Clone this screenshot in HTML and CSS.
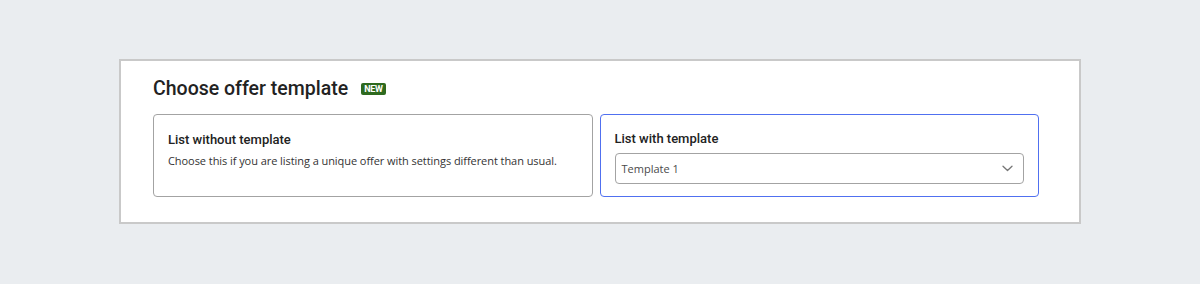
FILE: index.html
```html
<!DOCTYPE html>
<html lang="en">
<head>
<meta charset="utf-8">
<title>Choose offer template</title>
<link rel="stylesheet" href="styles.css">
</head>
<body>
  <section class="panel">
    <header class="panel-head">
      <h2 class="panel-title">Choose offer template</h2>
      <span class="badge">NEW</span>
    </header>
    <div class="options">
      <div class="option">
        <h3 class="option-title">List without template</h3>
        <p class="option-desc">Choose this if you are listing a unique offer with settings different than usual.</p>
      </div>
      <div class="option option-active">
        <h3 class="option-title">List with template</h3>
        <div class="select">
          <span class="select-value">Template 1</span>
          <svg class="select-chevron" width="11" height="7" viewBox="0 0 11 7" aria-hidden="true">
            <path d="M1 1.2 L5.5 5.5 L10 1.2" fill="none" stroke="#767676" stroke-width="1.3" stroke-linecap="round" stroke-linejoin="round"/>
          </svg>
        </div>
      </div>
    </div>
  </section>
</body>
</html>
```
FILE: styles.css
```css
* {
  box-sizing: border-box;
}

html, body {
  margin: 0;
  padding: 0;
}

body {
  background: #eaedf0;
  padding: 59px 0 0 119px;
  height: 284px;
  font-family: "Open Sans", "Liberation Sans", sans-serif;
  color: #222;
}

.panel {
  width: 962px;
  height: 165px;
  background: #fff;
  border: 2px solid #c9c9c9;
  padding: 16px 40px 25px 32px;
}

.panel-head {
  display: flex;
  align-items: center;
  gap: 13px;
  margin-bottom: 13px;
}

.panel-title {
  margin: 0;
  font-family: Roboto, "Liberation Sans", sans-serif;
  font-weight: 500;
  font-size: 19.5px;
  line-height: 24px;
  color: #222;
}

.badge {
  display: inline-block;
  background: #2e6a1f;
  color: #fff;
  font-family: Roboto, "Liberation Sans", sans-serif;
  font-weight: 700;
  font-size: 9px;
  line-height: 12px;
  height: 12px;
  padding: 0 3px;
  border-radius: 2px;
  letter-spacing: -0.3px;
}

.options {
  display: grid;
  grid-template-columns: 1fr 1fr;
  gap: 7px;
  height: 83px;
}

.option {
  border: 1px solid #a3a3a3;
  border-radius: 4px;
  padding: 15px 14px 12px 14px;
  background: #fff;
}

.option-active {
  border-color: #5070f0;
  padding-top: 14px;
}

.option-title {
  margin: 0;
  font-family: Roboto, "Liberation Sans", sans-serif;
  font-weight: 500;
  font-size: 13px;
  line-height: 20px;
  color: #222;
}

.option-desc {
  margin: 2px 0 0;
  font-size: 11px;
  line-height: 18px;
  letter-spacing: -0.06px;
  color: #333;
}

.select {
  margin-top: 4px;
  height: 31px;
  border: 1px solid #a3a3a3;
  border-radius: 4px;
  display: flex;
  align-items: center;
  justify-content: space-between;
  padding: 0 10px 0 6px;
}

.select-value {
  font-size: 11px;
  line-height: 16px;
  color: #4a4a4a;
}

.select-chevron {
  display: block;
}
```
